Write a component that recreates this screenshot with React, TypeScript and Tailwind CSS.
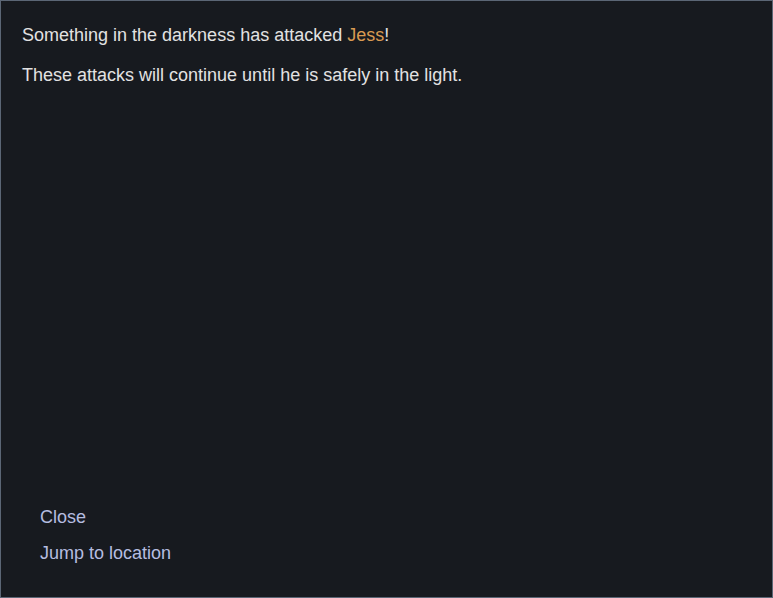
export default function App() {
  return (
    <div
      className="h-[598px] w-[773px] border border-[#5b6675] bg-[#171a1f] flex flex-col justify-between"
      style={{ fontFamily: '"Liberation Sans", Arial, sans-serif' }}
    >
      <div className="px-[21px] pt-[23px] text-[18px] leading-[22px] text-[#e2e2e2]">
        <p>
          Something in the darkness has attacked <span className="text-[#d99a52]">Jess</span>!
        </p>
        <p className="mt-[18px]">These attacks will continue until he is safely in the light.</p>
      </div>
      <div className="flex flex-col gap-[14px] px-[39px] pb-[33px] text-[18px] leading-[22px] text-[#b5bde0]">
        <button className="text-left">Close</button>
        <button className="text-left">Jump to location</button>
      </div>
    </div>
  )
}
